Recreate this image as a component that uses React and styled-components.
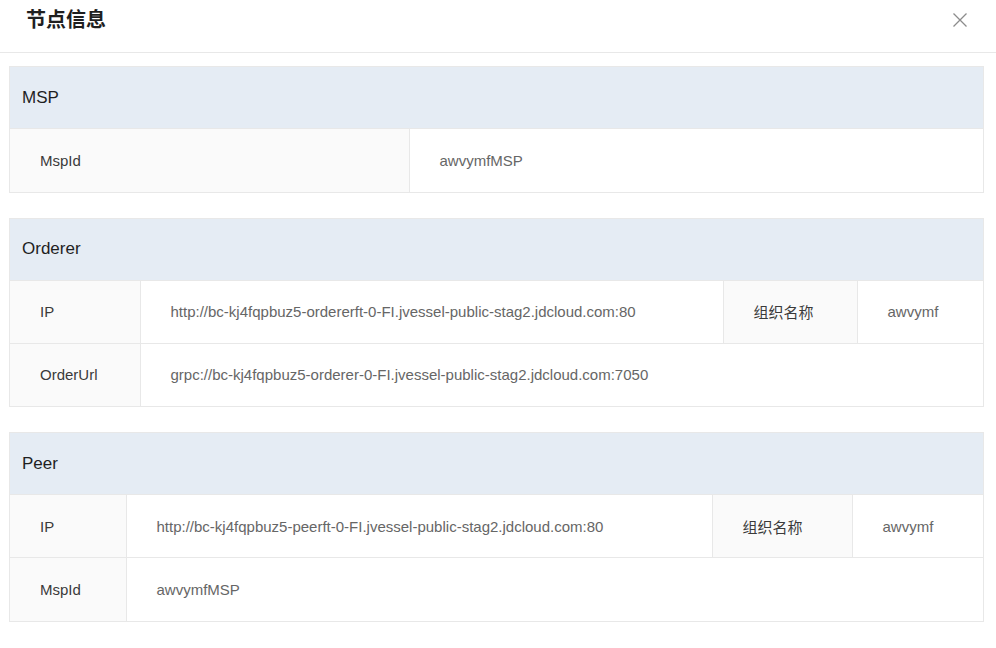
import styled, { createGlobalStyle } from "styled-components";

const Global = createGlobalStyle`
    body {
        margin: 0;
        background: #fff;
        font-family: "Liberation Sans", Arial, "Noto Sans CJK SC", sans-serif;
    }
`;

const Modal = styled.div`
    width: 996px;
    background: #fff;
`;

const Head = styled.div`
    height: 53px;
    border-bottom: 1px solid #e8e8e8;
    display: flex;
    justify-content: space-between;
    align-items: flex-start;
    padding: 5px 26px 0 26px;
    box-sizing: border-box;
`;

const Title = styled.h3`
    margin: 0;
    font-size: 20px;
    line-height: 27px;
    font-weight: 700;
    color: #1f1f1f;
    font-family: "Noto Sans CJK SC", sans-serif;
`;

const Close = styled.button`
    border: none;
    background: none;
    padding: 0;
    margin: 7px 2px 0 0;
    width: 16px;
    height: 16px;
    cursor: pointer;
    display: flex;
`;

const Body = styled.div`
    padding: 13px 12px 20px 9px;
    display: flex;
    flex-direction: column;
    gap: 25px;
`;

const Section = styled.div`
    border: 1px solid #e8e8e8;
`;

const SectionTitle = styled.div`
    height: 61px;
    background: #e5ecf4;
    display: flex;
    align-items: center;
    padding-left: 12px;
    font-size: 17px;
    color: #1f1f1f;
`;

const Table = styled.table`
    width: 100%;
    border-collapse: collapse;
    table-layout: fixed;
    font-size: 15px;
`;

const Row = styled.tr`
    border-top: 1px solid #e8e8e8;
`;

const Label = styled.td`
    height: 63px;
    padding: 0 0 0 30px;
    box-sizing: border-box;
    background: #fafafa;
    text-align: left;
    color: #3a3a3a;
    border-right: 1px solid #e8e8e8;
    border-left: ${p => (p.$inner ? "1px solid #e8e8e8" : "none")};
`;

const Value = styled.td`
    height: 63px;
    padding: 0 0 0 30px;
    box-sizing: border-box;
    color: #666;
    white-space: nowrap;
`;

function XIcon() {
    return (
        <svg width="16" height="16" viewBox="0 0 16 16">
            <path d="M1.5 1.5 L14.5 14.5 M14.5 1.5 L1.5 14.5" stroke="#8c8c8c" strokeWidth="1.3" fill="none" />
        </svg>
    );
}

const sections = [
    {
        name: "MSP",
        cols: [399],
        rows: [[["MspId", "awvymfMSP"]]],
    },
    {
        name: "Orderer",
        cols: [130, 583, 134],
        rows: [
            [
                ["IP", "http://bc-kj4fqpbuz5-ordererft-0-FI.jvessel-public-stag2.jdcloud.com:80"],
                ["组织名称", "awvymf"],
            ],
            [["OrderUrl", "grpc://bc-kj4fqpbuz5-orderer-0-FI.jvessel-public-stag2.jdcloud.com:7050"]],
        ],
    },
    {
        name: "Peer",
        cols: [116, 586, 140],
        rows: [
            [
                ["IP", "http://bc-kj4fqpbuz5-peerft-0-FI.jvessel-public-stag2.jdcloud.com:80"],
                ["组织名称", "awvymf"],
            ],
            [["MspId", "awvymfMSP"]],
        ],
    },
];

function InfoSection({ data }) {
    const wide = data.cols.length > 1;
    return (
        <Section>
            <SectionTitle>{data.name}</SectionTitle>
            <Table>
                <colgroup>
                    {data.cols.map((w, i) => (
                        <col key={i} style={{ width: w }} />
                    ))}
                    <col />
                </colgroup>
                <tbody>
                    {data.rows.map((row, i) => (
                        <Row key={i}>
                            {row.map(([k, v], j) => [
                                <Label key={"l" + j} $inner={j > 0}>{k}</Label>,
                                <Value key={"v" + j} colSpan={wide && row.length === 1 ? 3 : 1}>{v}</Value>,
                            ])}
                        </Row>
                    ))}
                </tbody>
            </Table>
        </Section>
    );
}

export default function App() {
    return (
        <Modal>
            <Global />
            <Head>
                <Title>节点信息</Title>
                <Close aria-label="close">
                    <XIcon />
                </Close>
            </Head>
            <Body>
                {sections.map(s => (
                    <InfoSection key={s.name} data={s} />
                ))}
            </Body>
        </Modal>
    );
}
